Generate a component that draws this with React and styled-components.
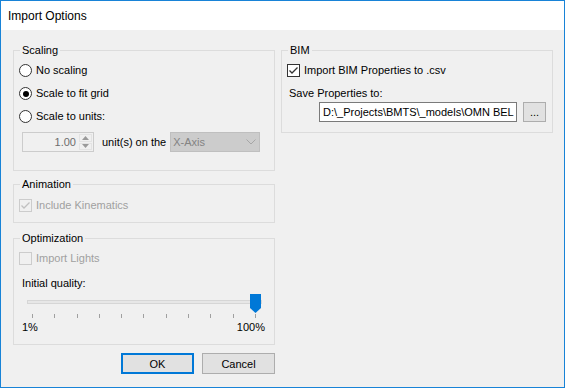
import React from "react";
import styled, { createGlobalStyle } from "styled-components";

const GlobalStyle = createGlobalStyle`
  html, body { margin: 0; padding: 0; background: #f0f0f0; }
  * { box-sizing: border-box; }
`;

const Window = styled.div`
  width: 565px;
  height: 388px;
  border: 1px solid #1883d7;
  background: #f0f0f0;
  display: flex;
  flex-direction: column;
  font-family: "Liberation Sans", Arial, sans-serif;
  font-size: 11px;
  color: #000;
  overflow: hidden;
`;

const TitleBar = styled.div`
  height: 29px;
  flex: none;
  background: #fff;
  display: flex;
  align-items: center;
  padding: 1px 0 0 7px;
  font-family: "Segoe UI", "Liberation Sans", sans-serif;
  font-size: 12px;
`;

const Body = styled.div`
  flex: 1;
  display: flex;
  gap: 6px;
  padding: 20px 11px 0 12px;
`;

const Column = styled.div`
  width: ${(p) => p.$w}px;
  display: flex;
  flex-direction: column;
`;

const Group = styled.div`
  position: relative;
  height: ${(p) => p.$h}px;
  margin-top: ${(p) => p.$mt || 0}px;
  border: 1px solid #dcdcdc;
  padding: ${(p) => p.$pt}px 0 0 5px;
`;

const Legend = styled.span`
  position: absolute;
  top: -7px;
  left: 6px;
  padding: 0 2px;
  line-height: 13px;
  background: #f0f0f0;
`;

const OptionRow = styled.div`
  height: 23px;
  display: flex;
  align-items: center;
  gap: 4px;
  line-height: 13px;
  color: ${(p) => (p.$disabled ? "#a0a0a0" : "#000")};
`;

const RadioDot = styled.span`
  width: 13px;
  height: 13px;
  flex: none;
  border-radius: 50%;
  border: 1px solid #333;
  background: #fff;
  display: flex;
  align-items: center;
  justify-content: center;
  &::after {
    content: "";
    width: 6px;
    height: 6px;
    border-radius: 50%;
    background: ${(p) => (p.$checked ? "#000" : "transparent")};
  }
`;

const CheckBox = styled.span`
  width: 13px;
  height: 13px;
  flex: none;
  border: 1px solid ${(p) => (p.$disabled ? "#cccccc" : "#333")};
  background: ${(p) => (p.$disabled ? "#f0f0f0" : "#fff")};
  display: flex;
  align-items: center;
  justify-content: center;
`;

const UnitsRow = styled.div`
  height: 20px;
  margin: 4px 0 0 3px;
  display: flex;
  align-items: center;
`;

const Spinner = styled.div`
  width: 72px;
  height: 20px;
  border: 1px solid #cccccc;
  display: flex;
`;

const SpinValue = styled.div`
  flex: 1;
  text-align: right;
  line-height: 18px;
  padding-right: 2px;
  color: #6d6d6d;
`;

const SpinButtons = styled.div`
  width: 15px;
  display: flex;
  flex-direction: column;
  padding: 1px;
`;

const SpinButton = styled.div`
  flex: 1;
  display: flex;
  align-items: center;
  justify-content: center;
  border: 1px solid #e3e3e3;
  & + & { margin-top: 1px; }
`;

const UnitsLabel = styled.span`
  margin: 0 4px 0 8px;
  color: #000;
`;

const Select = styled.div`
  width: 90px;
  height: 20px;
  border: 1px solid #bfbfbf;
  background: #cccccc;
  color: #838383;
  display: flex;
  align-items: center;
  justify-content: space-between;
  padding: 0 3px 0 2px;
`;

const FieldLabel = styled.div`
  line-height: 13px;
  margin: ${(p) => p.$mt}px 0 0 ${(p) => p.$ml}px;
`;

const SliderArea = styled.div`
  position: relative;
  width: 235px;
  height: 22px;
  margin: 1px 0 0 8px;
`;

const Track = styled.div`
  position: absolute;
  left: 0;
  right: 0;
  top: 9px;
  height: 4px;
  border: 1px solid #d6d6d6;
  background: #e7e7e7;
`;

const Thumb = styled.svg`
  position: absolute;
  left: 223px;
  top: 3px;
`;

const Ticks = styled.div`
  width: 224px;
  height: 4px;
  margin: 1px 0 0 13px;
  display: flex;
  justify-content: space-between;
`;

const Tick = styled.span`
  width: 1px;
  height: 4px;
  background: #a0a0a0;
`;

const RangeLabels = styled.div`
  width: 243px;
  margin: 3px 0 0 3px;
  line-height: 13px;
  display: flex;
  justify-content: space-between;
`;

const ButtonRow = styled.div`
  margin-top: 8px;
  display: flex;
  justify-content: flex-end;
  gap: 8px;
`;

const Button = styled.div`
  width: ${(p) => p.$w || 73}px;
  height: ${(p) => p.$h || 21}px;
  background: #e1e1e1;
  border: ${(p) => (p.$default ? "2px solid #0078d7" : "1px solid #adadad")};
  display: flex;
  align-items: center;
  justify-content: center;
`;

const PathRow = styled.div`
  margin: 2px 0 0 32px;
  display: flex;
  gap: 6px;
`;

const TextBox = styled.div`
  width: 198px;
  height: 20px;
  border: 1px solid #7a7a7a;
  background: #fff;
  padding-left: 3px;
  line-height: 18px;
  white-space: nowrap;
  overflow: hidden;
`;

const Radio = ({ checked, children }) => (
  <OptionRow>
    <RadioDot $checked={checked} />
    <span>{children}</span>
  </OptionRow>
);

const Check = ({ checked, disabled, children }) => (
  <OptionRow $disabled={disabled}>
    <CheckBox $disabled={disabled}>
      {checked && (
        <svg width="11" height="11" viewBox="0 0 11 11">
          <polyline
            points="1.5,5.5 4,8 9.5,2.5"
            fill="none"
            stroke={disabled ? "#c0c0c0" : "#333"}
            strokeWidth="1.3"
          />
        </svg>
      )}
    </CheckBox>
    <span>{children}</span>
  </OptionRow>
);

const Arrow = ({ up }) => (
  <svg width="7" height="4" viewBox="0 0 7 4">
    <polygon points={up ? "0,4 7,4 3.5,0" : "0,0 7,0 3.5,4"} fill="#9a9a9a" />
  </svg>
);

const App = () => {
  return (
    <Window>
      <GlobalStyle />
      <TitleBar>Import Options</TitleBar>
      <Body>
        <Column $w={262}>
          <Group $h={121} $pt={8}>
            <Legend>Scaling</Legend>
            <Radio>No scaling</Radio>
            <Radio checked>Scale to fit grid</Radio>
            <Radio>Scale to units:</Radio>
            <UnitsRow>
              <Spinner>
                <SpinValue>1.00</SpinValue>
                <SpinButtons>
                  <SpinButton><Arrow up /></SpinButton>
                  <SpinButton><Arrow /></SpinButton>
                </SpinButtons>
              </Spinner>
              <UnitsLabel>unit(s) on the</UnitsLabel>
              <Select>
                <span>X-Axis</span>
                <svg width="10" height="6" viewBox="0 0 10 6">
                  <polyline points="0.5,0.5 5,5 9.5,0.5" fill="none" stroke="#a6a6a6" strokeWidth="1" />
                </svg>
              </Select>
            </UnitsRow>
          </Group>

          <Group $h={39} $mt={13} $pt={9}>
            <Legend>Animation</Legend>
            <Check checked disabled>Include Kinematics</Check>
          </Group>

          <Group $h={107} $mt={15} $pt={8}>
            <Legend>Optimization</Legend>
            <Check disabled>Import Lights</Check>
            <FieldLabel $mt={7} $ml={3}>Initial quality:</FieldLabel>
            <SliderArea>
              <Track />
              <Thumb width="11" height="19" viewBox="0 0 11 19">
                <path d="M0 0 H11 V14 L5.5 19 L0 14 Z" fill="#0078d7" />
              </Thumb>
            </SliderArea>
            <Ticks>
              {Array.from({ length: 11 }, (_, i) => (
                <Tick key={i} />
              ))}
            </Ticks>
            <RangeLabels>
              <span>1%</span>
              <span>100%</span>
            </RangeLabels>
          </Group>

          <ButtonRow>
            <Button $default>OK</Button>
            <Button>Cancel</Button>
          </ButtonRow>
        </Column>

        <Column $w={272}>
          <Group $h={83} $pt={8}>
            <Legend>BIM</Legend>
            <Check checked>Import BIM Properties to .csv</Check>
            <FieldLabel $mt={5} $ml={2}>Save Properties to:</FieldLabel>
            <PathRow>
              <TextBox>D:\_Projects\BMTS\_models\OMN BEL</TextBox>
              <Button $w={23} $h={20}>...</Button>
            </PathRow>
          </Group>
        </Column>
      </Body>
    </Window>
  );
};

export default App;
